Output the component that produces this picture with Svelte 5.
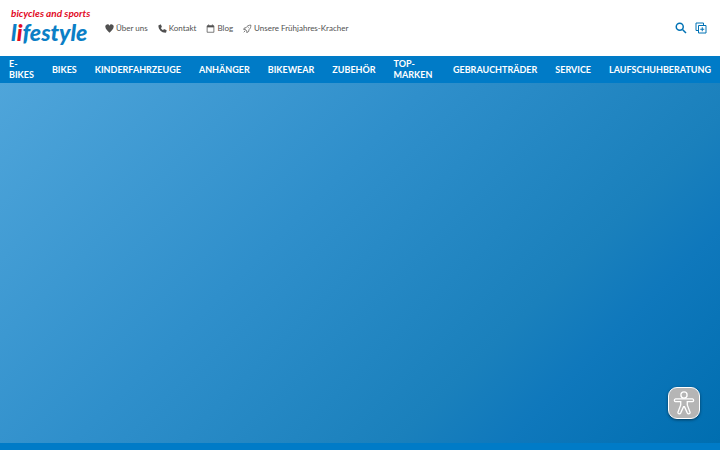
<script lang="ts">
	const metaLinks = [
		{ label: 'Über uns', icon: 'heart' },
		{ label: 'Kontakt', icon: 'phone' },
		{ label: 'Blog', icon: 'calendar' },
		{ label: 'Unsere Frühjahres-Kracher', icon: 'rocket' }
	];

	const categories = [
		'E-Bikes',
		'Bikes',
		'Kinderfahrzeuge',
		'Anhänger',
		'Bikewear',
		'Zubehör',
		'Top-Marken',
		'Gebrauchträder',
		'Service',
		'Laufschuhberatung'
	];
</script>

<header class="top">
	<a class="logo" href="/" aria-label="bicycles and sports lifestyle">
		<span class="claim">bicycles and sports</span>
		<span class="name">l<span class="red">i</span>festyle</span>
	</a>

	<nav class="meta" aria-label="Service">
		{#each metaLinks as link}
			<a href="/">
				<svg viewBox="0 0 24 24" aria-hidden="true">
					{#if link.icon === 'heart'}
						<path
							class="fill"
							d="M12 23C8 19 1 14 1 8A5.800 5.800 0 0 1 12 4.500A5.800 5.800 0 0 1 23 8C23 14 16 19 12 23Z"
						/>
					{:else if link.icon === 'phone'}
						<path
							class="fill"
							d="M2 3L6.500 1Q7.500 .8 8 1.800L10.300 7Q10.600 8 9.800 8.700L7.500 10.500Q9.500 14.500 13.500 16.500L15.300 14.200Q16 13.400 17 13.700L22.200 16Q23.200 16.500 23 17.500L21.800 22Q21.500 23 20 23C9.500 23 1 14.500 1 4.500Q1 3.500 2 3Z"
						/>
					{:else if link.icon === 'calendar'}
						<path d="M3 5h18v17H3zM7 1v4M17 1v4" />
						<path class="fill" d="M3 4h18v5H3z" />
					{:else}
						<path
							d="M21 3C15 3 11 5 8 10L3 11L2 15L7 15L10 19L10 23L15 20L16 15C20 12 21 8 21 3ZM6 18L2 22M14 9L16 11"
						/>
					{/if}
				</svg>
				{link.label}
			</a>
		{/each}
	</nav>

	<div class="tools">
		<button type="button" aria-label="Suche">
			<svg viewBox="0 0 24 24" aria-hidden="true">
				<circle cx="9.500" cy="9.500" r="7" />
				<path class="handle" d="M15 15l7 7" />
			</svg>
		</button>
		<button type="button" aria-label="Vergleichen">
			<svg viewBox="0 0 24 24" aria-hidden="true">
				<path d="M7 17H2V2h15v5M7 7h15v15H7zM14.500 10.500v8M10.500 14.500h8" />
			</svg>
		</button>
	</div>
</header>

<nav class="categories" aria-label="Kategorien">
	{#each categories as category}
		<a href="/">{category}</a>
	{/each}
</nav>

<main class="hero"></main>

<button class="accessibility" type="button" aria-label="Barrierefreiheit">
	<svg viewBox="0 0 32 32" aria-hidden="true">
		<circle cx="16" cy="7.500" r="3.300" />
		<path
			d="M7 11.500H25Q26.300 11.700 26.300 13Q26.300 14.300 25 14.500H19.500V18L22.500 26Q22.500 27.500 21 27.500Q20 27.500 19.500 26.500L16.500 20H15.500L12.500 26.500Q12 27.500 11 27.500Q9.500 27.500 9.500 26L12.500 18V14.500H7Q5.700 14.300 5.700 13Q5.700 11.700 7 11.500Z"
		/>
	</svg>
</button>

<style>
	:global(body) {
		margin: 0;
		min-height: 100vh;
		background: #007bc7;
		font-family: Lato, sans-serif;
	}

	a {
		color: inherit;
		text-decoration: none;
	}

	button {
		padding: 0;
		border: 0;
		background: none;
		cursor: pointer;
	}

	svg {
		fill: none;
		stroke: currentColor;
		stroke-width: 2;
	}

	.fill {
		fill: currentColor;
		stroke: none;
	}

	.top {
		display: flex;
		align-items: center;
		min-height: 56px;
		padding: 0 13px 0 11px;
		box-sizing: border-box;
		background: #fff;
		color: #505050;
	}

	.logo {
		display: flex;
		flex-direction: column;
		width: 76px;
		margin-right: 18px;
		padding-bottom: 3px;
		font-weight: 700;
		font-style: italic;
		white-space: nowrap;
	}

	.claim {
		font-size: 10px;
		line-height: 11px;
		color: #e20a1f;
	}

	.name {
		font-size: 23px;
		font-weight: 900;
		line-height: 27px;
		color: #0b7fc6;
	}

	.red {
		color: #e20a1f;
	}

	.meta {
		display: flex;
		flex: 1;
		gap: 10px;
		font-size: 8px;
		line-height: 12px;
	}

	.meta a {
		display: flex;
		align-items: center;
		gap: 2px;
		white-space: nowrap;
	}

	.meta svg {
		width: 9px;
		height: 9px;
	}

	.tools {
		display: flex;
		gap: 8px;
		color: #0072b5;
	}

	.tools button {
		display: flex;
		color: inherit;
	}

	.tools svg {
		width: 12px;
		height: 12px;
	}

	.tools circle,
	.handle {
		stroke-width: 3;
	}

	.categories {
		display: flex;
		align-items: center;
		min-height: 27px;
		background: #007bc7;
		color: #fff;
		font-size: 9px;
		font-weight: 700;
		line-height: 11px;
		text-transform: uppercase;
	}

	.categories a {
		padding: 0 9px 1px;
	}

	.hero {
		height: 80vh;
		background: linear-gradient(135deg, #4fa5da 0%, #2f8fcb 40%, #1a80bc 70%, #0f78bc 80%, #006eb0 100%);
	}

	.accessibility {
		position: fixed;
		right: 20px;
		bottom: 31px;
		display: flex;
		border: 1px solid #fff;
		border-radius: 9px;
		background: #b5b5b5;
		box-shadow: 0 1px 3px rgba(0, 0, 0, 0.5);
		color: #fff;
	}

	.accessibility svg {
		width: 30px;
		height: 30px;
		stroke-width: 1.4;
	}
</style>
